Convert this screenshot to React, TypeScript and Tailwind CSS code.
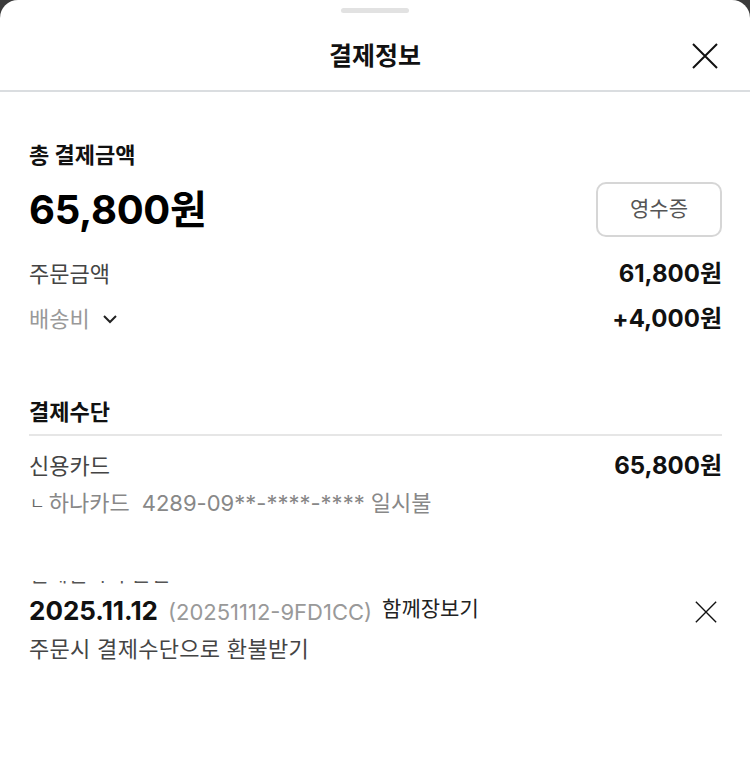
import React from "react";

function XIcon({ size = 26, stroke = 2 }: { size?: number; stroke?: number }) {
  return (
    <svg width={size} height={size} viewBox="0 0 26 26" fill="none">
      <path d="M1 1L25 25M25 1L1 25" stroke="#111" strokeWidth={stroke} />
    </svg>
  );
}

export default function App() {
  return (
    <div
      className="w-[750px] h-[769px] bg-[#3b3b3b] overflow-hidden"
      style={{ fontFamily: '"Inter", "Noto Sans CJK KR", sans-serif' }}
    >
      <div className="h-full bg-white rounded-t-[18px] flex flex-col">
        {/* handle */}
        <div className="flex justify-center pt-[8px]">
          <div className="w-[68px] h-[5px] rounded-full bg-[#e2e2e2]" />
        </div>
        {/* header */}
        <div className="relative h-[79px] flex items-center justify-center border-b-2 border-[#dadde0]">
          <span className="text-[25px] font-bold text-[#111] leading-[30px] mt-[8px]">결제정보</span>
          <button className="absolute right-[32px] top-[30px]">
            <XIcon />
          </button>
        </div>

        <div className="pl-[29px] pr-[28px]">
          {/* total */}
          <div className="mt-[48px] text-[22px] font-bold text-[#111] leading-[30px]">총 결제금액</div>
          <div className="flex items-center justify-between mt-[11px]">
            <div className="text-[40px] font-bold text-[#000] leading-[54px] tracking-[-0.3px] mt-[2px]">65,800원</div>
            <button className="w-[126px] h-[55px] rounded-[10px] border-2 border-[#d6d6d6] text-[21px] text-[#555] flex items-center justify-center">
              영수증
            </button>
          </div>
          <div className="flex items-center justify-between mt-[20px] h-[34px]">
            <span className="text-[22px] text-[#444]">주문금액</span>
            <span className="text-[24px] font-bold text-[#111]">61,800원</span>
          </div>
          <div className="flex items-center justify-between mt-[11px] h-[34px]">
            <span className="text-[22px] text-[#999] flex items-center gap-[12px]">
              배송비
              <svg width="16" height="10" viewBox="0 0 16 10" fill="none">
                <path d="M2 2L8 8L14 2" stroke="#222" strokeWidth="2" />
              </svg>
            </span>
            <span className="text-[24px] font-bold text-[#111]">+4,000원</span>
          </div>

          {/* method */}
          <div className="mt-[61px] text-[22px] font-bold text-[#111] leading-[30px]">결제수단</div>
          <div className="mt-[7px] h-[2px] bg-[#e6e6e6]" />
          <div className="flex items-center justify-between mt-[13px] h-[34px]">
            <span className="text-[22px] text-[#444]">신용카드</span>
            <span className="text-[24px] font-bold text-[#111]">65,800원</span>
          </div>
          <div className="mt-[3px] h-[34px] flex items-center text-[22px] text-[#888]">
            <span className="text-[16px] ml-[1px] mr-[4px] text-[#666]">ㄴ</span>
            <span>하나카드</span>
            <span className="ml-[12px]">4289-09**-****-**** 일시불</span>
          </div>

          {/* clipped strip */}
          <div className="mt-[61px] h-[3px] overflow-hidden">
            <div className="-mt-[21px] text-[21px] leading-[28px] text-[#555]">결제일시 주문번호</div>
          </div>

          <div className="flex items-center justify-between mt-[13px] h-[30px]">
            <div className="flex items-baseline gap-[10px]">
              <span className="text-[26px] font-bold text-[#111] leading-[30px]">2025.11.12</span>
              <span className="text-[22px] text-[#999]">(20251112-9FD1CC)</span>
              <span className="text-[21px] text-[#222] -translate-y-[4px]">함께장보기</span>
            </div>
            <button className="mr-[5px]">
              <XIcon size={22} stroke={1.6} />
            </button>
          </div>
          <div className="mt-[10px] h-[27px] overflow-hidden">
            <div className="text-[22px] text-[#444] leading-[30px] -mt-[3px] tracking-[0.3px]">주문시 결제수단으로 환불받기</div>
          </div>
        </div>
      </div>
    </div>
  );
}
